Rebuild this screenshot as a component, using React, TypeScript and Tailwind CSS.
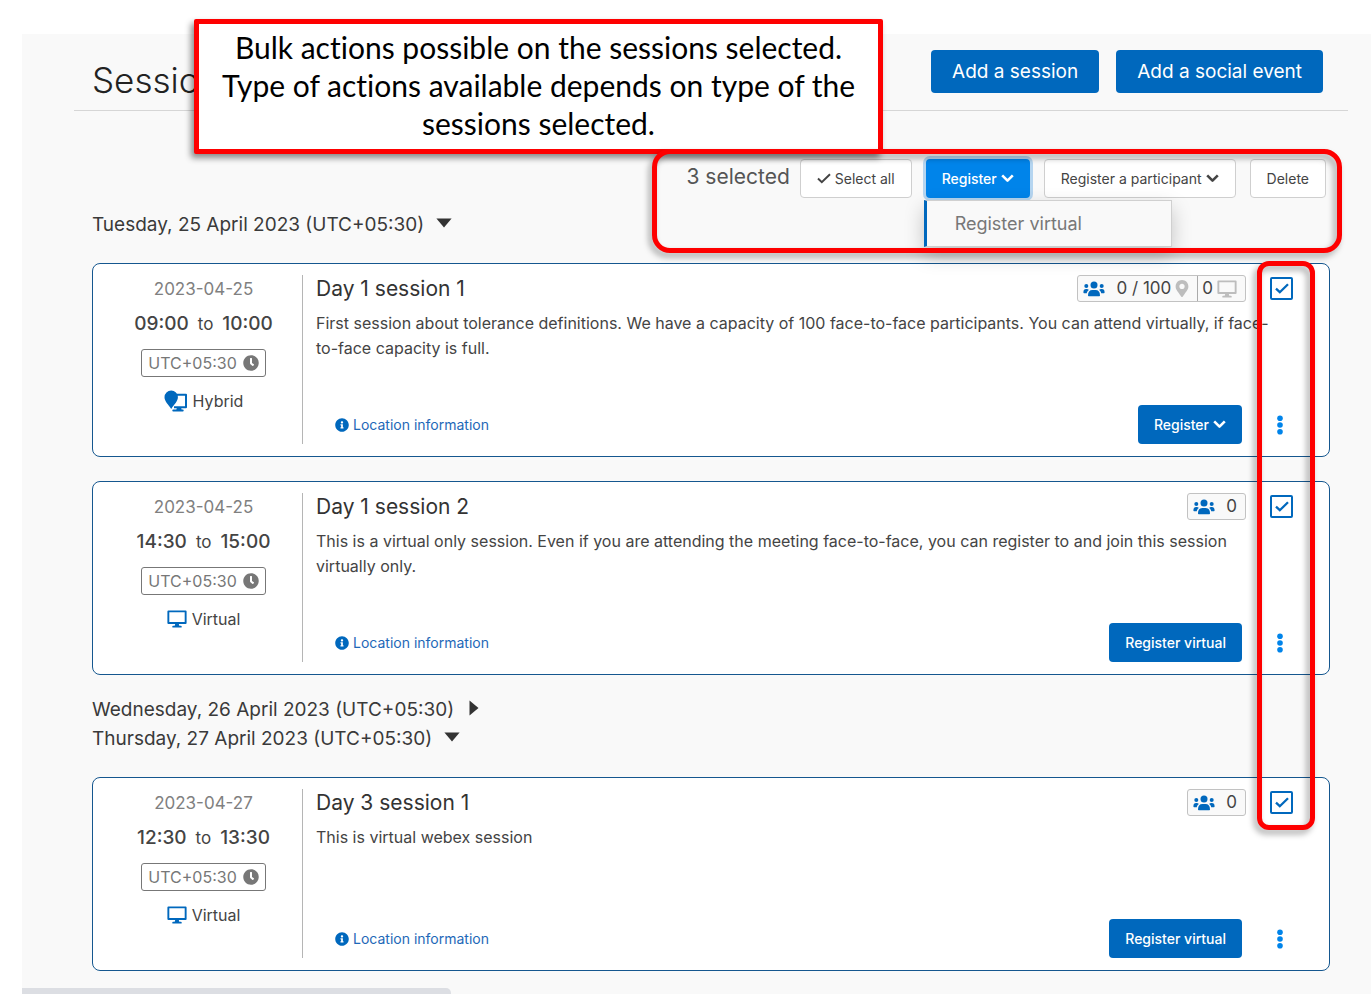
import { useState } from "react";
import type { ReactNode } from "react";
import { FaClock, FaInfoCircle, FaMapMarkerAlt } from "react-icons/fa";

type Session = {
  id: string;
  date: string;
  start: string;
  end: string;
  mode: "Hybrid" | "Virtual";
  title: string;
  text: string;
  capacity?: number;
};

const dayOne: Session[] = [
  {
    id: "d1s1",
    date: "2023-04-25",
    start: "09:00",
    end: "10:00",
    mode: "Hybrid",
    title: "Day 1 session 1",
    text: "First session about tolerance definitions. We have a capacity of 100 face-to-face participants. You can attend virtually, if face-to-face capacity is full.",
    capacity: 100,
  },
  {
    id: "d1s2",
    date: "2023-04-25",
    start: "14:30",
    end: "15:00",
    mode: "Virtual",
    title: "Day 1 session 2",
    text: "This is a virtual only session. Even if you are attending the meeting face-to-face, you can register to and join this session virtually only.",
  },
];

const dayThree: Session[] = [
  {
    id: "d3s1",
    date: "2023-04-27",
    start: "12:30",
    end: "13:30",
    mode: "Virtual",
    title: "Day 3 session 1",
    text: "This is virtual webex session",
  },
];

function Chevron() {
  return (
    <svg viewBox="0 0 13 9" className="h-[9px] w-[13px]" fill="none" stroke="currentColor" strokeWidth="2.6" aria-hidden="true">
      <path d="M1.2 1.4 6.5 6.7 11.8 1.4" strokeLinejoin="round" />
    </svg>
  );
}

function Check({ className }: { className: string }) {
  return (
    <svg viewBox="0 0 14 11" className={className} fill="none" stroke="currentColor" aria-hidden="true">
      <path d="M1 5.6 4.8 9.2 13 1.2" />
    </svg>
  );
}

function Monitor({ className }: { className: string }) {
  return (
    <svg viewBox="0 0 20 18" className={className} fill="currentColor" aria-hidden="true">
      <path fillRule="evenodd" d="M1.4 0.5h17.2a1 1 0 0 1 1 1v11.4a1 1 0 0 1-1 1h-6.8l.5 1.9h1.6a.8.8 0 0 1 0 1.7H6.1a.8.8 0 0 1 0-1.7h1.6l.5-1.9H1.4a1 1 0 0 1-1-1V1.5a1 1 0 0 1 1-1ZM2.3 2.3v9.8h15.4V2.3Z" />
    </svg>
  );
}

function People() {
  return (
    <svg viewBox="0 0 22 16" className="h-4 w-[22px]" fill="#0068bd" aria-hidden="true">
      <circle cx="11" cy="4.1" r="3.5" />
      <path d="M5 14.2c0-3.3 1.6-5.3 4.4-5.3h3.2c2.8 0 4.4 2 4.4 5.3 0 .7-.4 1.1-1.100 1.100H6.100c-.7 0-1.100-.4-1.100-1.100Z" />
      <circle cx="3.300" cy="4.900" r="2" />
      <circle cx="18.700" cy="4.900" r="2" />
      <path d="M.4 11.300c0-2 1-3.200 2.700-3.200 1.300 0 2.200.4 2.700 1C4.600 9.900 4 11 3.800 12.300H1.400c-.6 0-1-.4-1-1Z" />
      <path d="M21.600 11.300c0-2-1-3.200-2.700-3.200-1.300 0-2.200.4-2.700 1 1.200.8 1.800 1.900 2 3.200h2.400c.6 0 1-.4 1-1Z" />
    </svg>
  );
}

function HybridIcon() {
  return (
    <svg viewBox="0 0 24 23" className="h-[23px] w-6" aria-hidden="true">
      <path d="M11 4.8h11v12.4H10" fill="none" stroke="#0068bd" strokeWidth="2" strokeLinejoin="round" />
      <path d="M13 17h4l.6 2.6h1.2a.9.9 0 0 1 0 1.8H9.2a.9.9 0 0 1 0-1.8h3.2Z" fill="#0068bd" />
      <path d="M7.2 0.6a6.7 6.7 0 0 1 6.7 6.7c0 3.7-3.7 7.4-6.7 11.7-3-4.3-6.7-8-6.7-11.7A6.7 6.7 0 0 1 7.2.6Z" fill="#0068bd" />
    </svg>
  );
}

function Kebab() {
  return (
    <svg viewBox="0 0 6 20" className="h-5 w-[6px]" fill="#0084ea" aria-hidden="true">
      <circle cx="3" cy="3.2" r="2.800" />
      <circle cx="3" cy="10" r="2.800" />
      <circle cx="3" cy="16.800" r="2.800" />
    </svg>
  );
}

function SmallButton({ kind, children }: { kind: "light" | "primary" | "active"; children: ReactNode }) {
  const look = {
    light: "border border-[#cfcfcf] bg-white text-[#444]",
    primary: "bg-[#0068bd] font-medium text-white",
    active: "bg-[#0084ea] font-medium text-white ring-3 ring-[#b5d5f0]",
  }[kind];
  return (
    <button type="button" className={`flex h-[39px] shrink-0 items-center gap-1 rounded-[4px] px-4 text-[14px] whitespace-nowrap ${look}`}>
      {children}
    </button>
  );
}

function DayHeading({ label, open }: { label: string; open: boolean }) {
  return (
    <h2 className="leading-[29px]">
      <button type="button" aria-expanded={open} className="flex items-center gap-3 text-[19px] text-[#3a3a3a]">
        {label}
        {open ? (
          <svg viewBox="0 0 16 10" className="mb-1 h-[10px] w-4" fill="#333" aria-hidden="true">
            <path d="M.4.5h15.2L8 9.5Z" />
          </svg>
        ) : (
          <svg viewBox="0 0 16 16" className="mb-1 h-4 w-4" fill="#333" aria-hidden="true">
            <path d="M3.5.5v15L12.5 8Z" />
          </svg>
        )}
      </button>
    </h2>
  );
}

function SessionCard({ session }: { session: Session }) {
  const [checked, setChecked] = useState(true);
  const hybrid = session.mode === "Hybrid";
  return (
    <article className="flex rounded-lg border border-[#15578f] bg-white pt-[11px] pb-3 pl-3">
      <div className="flex min-h-[169px] w-[198px] shrink-0 flex-col items-center border-r border-[#b5b5b5] text-[16px] text-[#444]">
        <p className="text-[17px] leading-[29px] text-[#808080]">{session.date}</p>
        <p className="mt-[6px] flex items-baseline gap-[9px] text-[19px] leading-[28px] font-medium">
          {session.start} <span className="text-[17px] font-normal">to</span> {session.end}
        </p>
        <p className="mt-[11px] flex h-7 items-center gap-[6px] rounded-[3px] border border-[#777] px-[6px] text-[#777]">
          UTC+05:30 <FaClock className="h-4 w-4" aria-hidden="true" />
        </p>
        <p className="mt-[11px] flex h-[26px] items-center gap-[5px]">
          {hybrid ? <HybridIcon /> : <Monitor className="h-[18px] w-5 text-[#0068bd]" />}
          {session.mode}
        </p>
      </div>
      <div className="flex min-w-0 flex-1 flex-col pr-[29px] pl-[13px]">
        <div className="flex h-[27px] items-center pr-[7px]">
          <h3 className="flex-1 text-[21px] text-[#333]">{session.title}</h3>
          <div className="mr-6 flex h-[27px] items-center rounded-[3px] border border-[#c2c2c2] bg-[#f9f9f9] text-[17px] text-[#444]">
            <span className="flex items-center gap-[11px] pr-2 pl-[5px]">
              <People />
              <span className="flex items-center gap-1">
                {hybrid ? `0 / ${session.capacity}` : "0"}
                {hybrid && <FaMapMarkerAlt className="h-[17px] w-[14px] text-[#bdbdbd]" aria-hidden="true" />}
              </span>
            </span>
            {hybrid && (
              <span className="flex h-full items-center gap-1 border-l border-[#aaa] pr-2 pl-1">
                0 <Monitor className="h-[18px] w-5 text-[#bdbdbd]" />
              </span>
            )}
          </div>
          <label className="grid h-[23px] w-[23px] place-items-center text-[#0068bd]">
            <input
              type="checkbox"
              checked={checked}
              onChange={() => setChecked(!checked)}
              aria-label={`Select ${session.title}`}
              className="col-start-1 row-start-1 h-[23px] w-[23px] appearance-none rounded-[2px] border-2 border-[#0068bd] bg-white"
            />
            {checked && <Check className="pointer-events-none z-10 col-start-1 row-start-1 h-[11px] w-[14px] stroke-[2.3]" />}
          </label>
        </div>
        <p className="mt-[9px] pr-4 text-[16px] leading-[25px] text-[#444]">{session.text}</p>
        <div className="mt-auto flex items-center pl-[19px]">
          <a href="#location" className="flex flex-1 items-center gap-1 text-[14px] text-[#1e68b8]">
            <FaInfoCircle className="h-[14px] w-[14px] text-[#0068bd]" aria-hidden="true" />
            Location information
          </a>
          <SmallButton kind="primary">
            {hybrid ? "Register" : "Register virtual"}
            {hybrid && <Chevron />}
          </SmallButton>
          <button type="button" aria-label={`More actions for ${session.title}`} className="mr-[6px] ml-6 flex w-7 justify-center">
            <Kebab />
          </button>
        </div>
      </div>
    </article>
  );
}

export default function App() {
  return (
    <div className="relative min-h-screen overflow-hidden bg-white pt-[34px] pl-[22px] font-['Inter',sans-serif]">
      <main className="bg-[#f9f9f9]">
        <header className="mr-[23px] ml-[52px] flex items-start gap-[17px] border-b border-[#d6d6d6] pt-4 pr-[25px] pb-3 pl-[18px]">
          <h1 className="flex-1 pt-[13px] text-[35px] leading-[35px] font-light text-[#222]">Sessions</h1>
          <button type="button" className="h-[43px] rounded-[4px] bg-[#0068bd] px-[21px] pt-[2px] text-[19px] text-white">
            Add a session
          </button>
          <button type="button" className="h-[43px] rounded-[4px] bg-[#0068bd] px-[21px] pt-[2px] text-[19px] text-white">
            Add a social event
          </button>
        </header>

        <div className="pr-[41px] pl-[70px]">
          <div className="relative mt-12 flex h-[39px] items-center justify-end gap-[14px] pr-1">
            <span className="-mr-1 pb-1 text-[21px] leading-[28px] text-[#555]">3 selected</span>
            <SmallButton kind="light">
              <Check className="h-[11px] w-[14px] stroke-2" />
              Select all
            </SmallButton>
            <div className="relative">
              <SmallButton kind="active">
                Register <Chevron />
              </SmallButton>
              <div className="absolute top-[41px] -left-[2px] z-10 h-[47px] w-[248px] border border-l-3 border-[#d0d0d0] border-l-[#0068bd] bg-[#f9f9f9] shadow-[0_8px_20px_rgba(0,0,0,0.22)]">
                <a href="#register-virtual" className="block pl-7 text-[18px] leading-[45px] text-[#777]">
                  Register virtual
                </a>
              </div>
            </div>
            <SmallButton kind="light">
              Register a participant <Chevron />
            </SmallButton>
            <SmallButton kind="light">Delete</SmallButton>
            <div className="pointer-events-none absolute -top-[10px] -right-3 z-20 h-[104px] w-[690px] rounded-[18px] border-5 border-[#fe0000] drop-shadow-[-3px_4px_3px_rgba(0,0,0,0.35)]" />
          </div>

          <div className="mt-3">
            <DayHeading label="Tuesday, 25 April 2023 (UTC+05:30)" open />
          </div>
          <div className="relative mt-6">
            <section className="flex flex-col gap-6">
              {dayOne.map((s) => (
                <SessionCard key={s.id} session={s} />
              ))}
            </section>
            <div className="mt-5 mb-6">
              <DayHeading label="Wednesday, 26 April 2023 (UTC+05:30)" open={false} />
              <DayHeading label="Thursday, 27 April 2023 (UTC+05:30)" open />
            </div>
            <section>
              {dayThree.map((s) => (
                <SessionCard key={s.id} session={s} />
              ))}
            </section>
            <div className="pointer-events-none absolute -top-[2px] right-[15px] bottom-[141px] z-20 w-[58px] rounded-[12px] border-5 border-[#fe0000] drop-shadow-[-3px_4px_3px_rgba(0,0,0,0.35)]" />
          </div>
        </div>
        <div className="mt-[17px] h-[6px] w-[429px] rounded-tr-[5px] bg-[#dcdee3]" />
      </main>

      <aside className="absolute top-[19px] left-[194px] z-10 w-[689px] rounded-[2px] border-5 border-[#fe0000] bg-white px-4 pt-1 pb-[7px] text-center font-['Lato',sans-serif] text-[30px] leading-[38px] text-black shadow-[-3px_4px_6px_rgba(0,0,0,0.45)] [font-variant-ligatures:none]">
        <p>Bulk actions possible on the sessions selected.</p>
        <p>Type of actions available depends on type of the sessions selected.</p>
      </aside>
    </div>
  );
}
